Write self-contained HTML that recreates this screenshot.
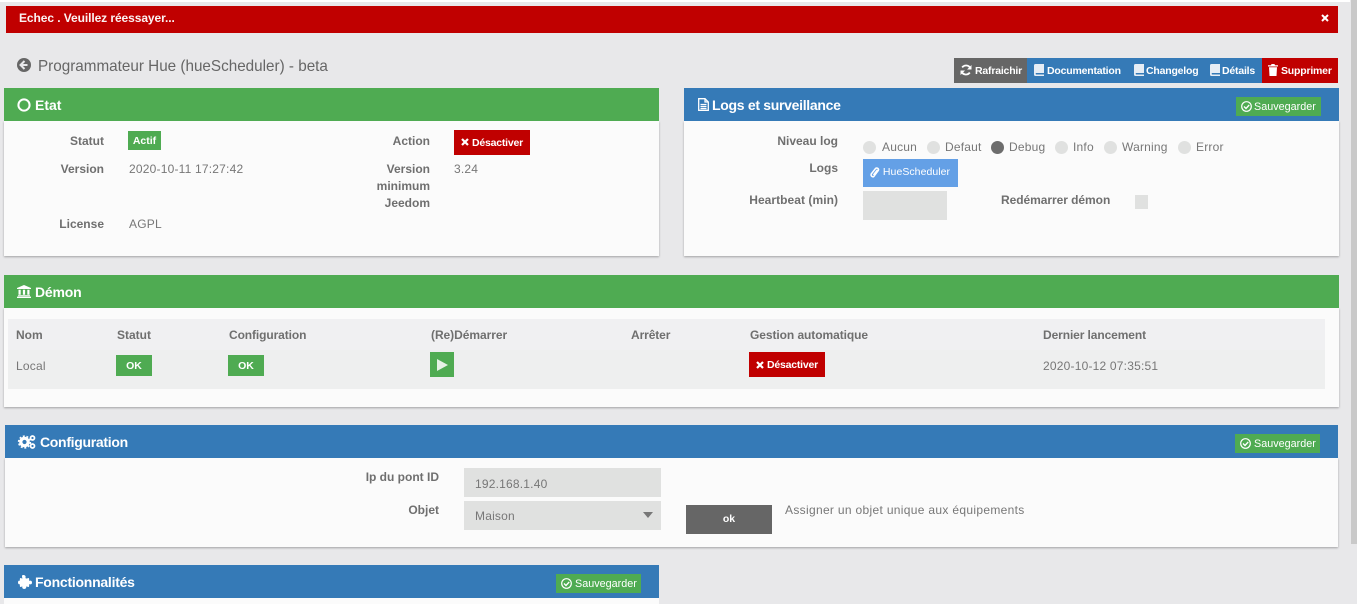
<!DOCTYPE html>
<html lang="fr"><head><meta charset="utf-8"><title>Programmateur Hue</title>
<style>
html,body{margin:0;padding:0;width:1357px;height:604px;overflow:hidden;background:#e8e8ea;font-family:"Liberation Sans",sans-serif;font-size:12px;color:#666}
.a{position:absolute;white-space:nowrap;margin-top:1px}
.bg{position:absolute}
.h{position:absolute;height:33px;color:#fff;font-size:14px;line-height:33px}
.body{position:absolute;background:#fbfbfb;box-shadow:0 1px 2px rgba(0,0,0,.3)}
.l{position:absolute;text-align:right;font-weight:bold;font-size:12px;color:#6f6f6f;white-space:nowrap;line-height:17px;margin-top:1px}
.v{position:absolute;font-size:12px;color:#777;white-space:nowrap;line-height:17px;margin-top:1px;letter-spacing:.2px}
.btn{position:absolute;color:#fff;font-size:10.5px;font-weight:bold;text-align:center;white-space:nowrap}
.btn span{letter-spacing:-.2px}
.red{background:#c00000}.grn{background:#4fab52}.blu{background:#357ab7}
.sv{position:absolute;background:#4fab52;color:#fff;font-size:10.8px;line-height:19px;height:19px;white-space:nowrap}
svg{position:absolute;overflow:visible}
.rd{position:absolute;width:13px;height:13px;border-radius:50%;background:#e0e1e0;top:141px}
.tb{position:absolute;height:25px;line-height:27px;color:#fff;font-size:10.5px;font-weight:bold;top:58px;white-space:nowrap;letter-spacing:-.2px}
</style></head><body>
<div class="bg" style="left:0;top:0;width:1350px;height:2px;background:#fff"></div>
<div class="bg" style="left:1351px;top:0;width:6px;height:544px;background:#c9c9c9"></div>

<!-- alert -->
<div class="bg red" style="left:6px;top:6px;width:1332px;height:27px"></div>
<div class="a" style="left:19px;top:10px;color:#fff;font-size:12px;font-weight:bold;line-height:15px;letter-spacing:-.08px;opacity:.95">Echec . Veuillez réessayer...</div>
<svg style="left:1321px;top:14px" width="8" height="8" viewBox="0 0 8 8"><path d="M1 1L7 7M7 1L1 7" stroke="#fff" stroke-width="2"/></svg>

<!-- title -->
<svg style="left:17px;top:58px" width="14" height="14" viewBox="0 0 14 14"><circle cx="7" cy="7" r="7" fill="#666"/><path d="M7.500 3L3.500 7l4 4M4 7h6.500" stroke="#e8e8ea" stroke-width="2" fill="none"/></svg>
<div class="a" style="left:38px;top:57px;font-size:15.25px;line-height:18px;color:#666">Programmateur Hue (hueScheduler) - beta</div>

<!-- toolbar -->
<div class="bg" style="left:954px;top:58px;width:73px;height:25px;background:#666"></div>
<div class="bg blu" style="left:1027px;top:58px;width:235px;height:25px"></div>
<div class="bg red" style="left:1262px;top:58px;width:76px;height:25px"></div>
<svg style="left:960px;top:64px" width="12" height="12" viewBox="0 0 12 12"><path d="M10.500 4.500A4.800 4.800 0 0 0 2.200 3.400M1.500 7.500a4.800 4.800 0 0 0 8.300 1.100" stroke="#fff" stroke-width="1.800" fill="none"/><path d="M11.500 1v4.500H7zM.5 11V6.500H5z" fill="#fff"/></svg>
<div class="tb" style="left:975px">Rafraichir</div>
<svg style="left:1034px;top:64px" width="10" height="12" viewBox="0 0 10 12"><path d="M1.500 0H10v9H2a1 1 0 0 0 0 1.500h8V12H1.500A1.500 1.500 0 0 1 0 10.500V1.500A1.500 1.500 0 0 1 1.500 0z" fill="#e6edf5"/></svg>
<div class="tb" style="left:1047px">Documentation</div>
<svg style="left:1134px;top:64px" width="10" height="12" viewBox="0 0 10 12"><path d="M1.500 0H10v9H2a1 1 0 0 0 0 1.500h8V12H1.500A1.500 1.500 0 0 1 0 10.500V1.500A1.500 1.500 0 0 1 1.500 0z" fill="#e6edf5"/></svg>
<div class="tb" style="left:1146px">Changelog</div>
<svg style="left:1210px;top:64px" width="10" height="12" viewBox="0 0 10 12"><path d="M1.500 0H10v9H2a1 1 0 0 0 0 1.500h8V12H1.500A1.500 1.500 0 0 1 0 10.500V1.500A1.500 1.500 0 0 1 1.500 0z" fill="#e6edf5"/></svg>
<div class="tb" style="left:1222px">Détails</div>
<svg style="left:1268px;top:64px" width="10" height="12" viewBox="0 0 10 12"><path d="M3.500 0h3l.5 1.200h3V2.500H0V1.200h3zM1 3.300h8L8.500 12h-7z" fill="#fff"/></svg>
<div class="tb" style="left:1281px">Supprimer</div>

<!-- Etat -->
<div class="body" style="left:4px;top:121px;width:655px;height:135px"></div>
<div class="h grn" style="left:4px;top:88px;width:655px"></div>
<svg style="left:17px;top:98px" width="14" height="14" viewBox="0 0 14 14"><circle cx="7" cy="7" r="5.600" fill="none" stroke="#fff" stroke-width="2"/></svg>
<div class="a" style="left:35px;top:88px;color:#fff;font-size:14px;line-height:33px;font-weight:bold">Etat</div>
<div class="l" style="left:40px;width:64px;top:132px">Statut</div>
<div class="btn grn" style="left:128px;top:131px;width:33px;height:19px;line-height:21px">Actif</div>
<div class="l" style="left:340px;width:90px;top:132px">Action</div>
<div class="btn red" style="left:454px;top:130px;width:76px;height:25px;line-height:26px"><span style="margin-left:11px">Désactiver</span></div>
<svg style="left:461px;top:138px" width="8" height="8" viewBox="0 0 8 8"><path d="M1 1L7 7M7 1L1 7" stroke="#fff" stroke-width="2.200"/></svg>
<div class="l" style="left:40px;width:64px;top:160px">Version</div>
<div class="v" style="left:129px;top:160px">2020-10-11 17:27:42</div>
<div class="l" style="left:340px;width:90px;top:160px">Version</div>
<div class="l" style="left:340px;width:90px;top:177px">minimum</div>
<div class="l" style="left:340px;width:90px;top:194px">Jeedom</div>
<div class="v" style="left:454px;top:160px">3.24</div>
<div class="l" style="left:40px;width:64px;top:215px">License</div>
<div class="v" style="left:129px;top:215px">AGPL</div>

<!-- Logs -->
<div class="body" style="left:684px;top:121px;width:655px;height:135px"></div>
<div class="h blu" style="left:684px;top:88px;width:655px"></div>
<svg style="left:698px;top:98px" width="11" height="13" viewBox="0 0 11 13"><path d="M.7.700H7L10.300 4v8.300H.7zM7 .700V4h3.300M2.500 6.500h6M2.500 8.500h6M2.500 10.500h6" fill="none" stroke="#fff" stroke-width="1.300"/></svg>
<div class="a" style="left:712px;top:88px;color:#fff;font-size:14px;line-height:33px;font-weight:bold;letter-spacing:-.3px">Logs et surveillance</div>
<div class="sv" style="left:1236px;top:97px;width:85px"><span style="position:absolute;left:18px;top:.5px">Sauvegarder</span></div>
<svg style="left:1241px;top:101px" width="11" height="11" viewBox="0 0 11 11"><circle cx="5.500" cy="5.500" r="4.800" fill="none" stroke="#fff" stroke-width="1.200"/><path d="M3 5.500l2 2 3.200-3.500" fill="none" stroke="#fff" stroke-width="1.300"/></svg>
<div class="l" style="left:740px;width:98px;top:132px">Niveau log</div>
<div class="rd" style="left:863px"></div><div class="v" style="left:882px;top:138px">Aucun</div>
<div class="rd" style="left:927px"></div><div class="v" style="left:945px;top:138px">Defaut</div>
<div class="rd" style="left:991px;background:#6d6d6d"></div><div class="v" style="left:1009px;top:138px">Debug</div>
<div class="rd" style="left:1055px"></div><div class="v" style="left:1073px;top:138px">Info</div>
<div class="rd" style="left:1104px"></div><div class="v" style="left:1122px;top:138px">Warning</div>
<div class="rd" style="left:1178px"></div><div class="v" style="left:1196px;top:138px">Error</div>
<div class="l" style="left:740px;width:98px;top:159px">Logs</div>
<div class="btn" style="left:863px;top:159px;width:95px;height:28px;line-height:27px;background:#64a0e6"><span style="margin-left:12px;font-weight:normal;letter-spacing:.05px">HueScheduler</span></div>
<svg style="left:870px;top:167px" width="10" height="11" viewBox="0 0 10 11"><path d="M3.500 8L7.500 2.800M1.200 7L5.500 1.500C7 .2 9.200 1.700 8.300 3.500L4 9.300C2.800 10.500.5 9.200 1.200 7z" fill="none" stroke="#fff" stroke-width="1.500"/></svg>
<div class="l" style="left:740px;width:98px;top:191px;letter-spacing:.05px">Heartbeat (min)</div>
<div class="bg" style="left:863px;top:191px;width:84px;height:29px;background:#e0e1e0"></div>
<div class="l" style="left:1001px;top:191px;letter-spacing:-.05px">Redémarrer démon</div>
<div class="bg" style="left:1135px;top:195px;width:13px;height:14px;background:#e0e1e0"></div>

<!-- Démon -->
<div class="body" style="left:4px;top:308px;width:1335px;height:99px"></div>
<div class="h grn" style="left:4px;top:275px;width:1335px"></div>
<svg style="left:17px;top:285px" width="14" height="13" viewBox="0 0 14 13"><path d="M7 0l7 3v1H0V3zM1.500 4.800h2.200v5H1.500zM5.900 4.800h2.200v5H5.900zM10.300 4.800h2.200v5h-2.200zM1 10.200h12v1H1zM0 11.600h14V13H0z" fill="#fff"/></svg>
<div class="a" style="left:35px;top:275px;color:#fff;font-size:14px;line-height:33px;font-weight:bold;letter-spacing:-.2px">Démon</div>
<div class="bg" style="left:8px;top:319px;width:1317px;height:70px;background:#eeefef"></div>
<div class="bg" style="left:8px;top:319px;width:1317px;height:31px;background:#f0f0f2"></div>
<div class="l" style="left:16px;top:326px">Nom</div>
<div class="l" style="left:117px;top:326px">Statut</div>
<div class="l" style="left:229px;top:326px;letter-spacing:-.1px">Configuration</div>
<div class="l" style="left:431px;top:326px;letter-spacing:-.05px">(Re)Démarrer</div>
<div class="l" style="left:631px;top:326px;letter-spacing:-.1px">Arrêter</div>
<div class="l" style="left:750px;top:326px;letter-spacing:-.07px">Gestion automatique</div>
<div class="l" style="left:1043px;top:326px;letter-spacing:-.1px">Dernier lancement</div>
<div class="v" style="left:16px;top:357px">Local</div>
<div class="btn grn" style="left:116px;top:355px;width:36px;height:21px;line-height:22px">OK</div>
<div class="btn grn" style="left:228px;top:355px;width:36px;height:21px;line-height:22px">OK</div>
<div class="bg grn" style="left:430px;top:352px;width:24px;height:25px"></div>
<svg style="left:437px;top:359px" width="11" height="12" viewBox="0 0 11 12"><path d="M0 0L11 6 0 12z" fill="#e6f2e6"/></svg>
<div class="btn red" style="left:749px;top:352px;width:76px;height:25px;line-height:27px"><span style="margin-left:11px">Désactiver</span></div>
<svg style="left:756px;top:361px" width="8" height="8" viewBox="0 0 8 8"><path d="M1 1L7 7M7 1L1 7" stroke="#fff" stroke-width="2.200"/></svg>
<div class="v" style="left:1043px;top:357px">2020-10-12 07:35:51</div>

<!-- Configuration -->
<div class="body" style="left:5px;top:458px;width:1333px;height:89px"></div>
<div class="h blu" style="left:5px;top:425px;width:1333px"></div>
<svg style="left:18px;top:435px" width="18" height="14" viewBox="0 0 18 14"><circle cx="6.500" cy="7" r="3.700" fill="none" stroke="#fff" stroke-width="3.200"/><circle cx="6.500" cy="7" r="5.900" fill="none" stroke="#fff" stroke-width="1.500" stroke-dasharray="2 1.700"/><circle cx="14.500" cy="3" r="2" fill="none" stroke="#fff" stroke-width="1.700"/><circle cx="14.500" cy="11" r="2" fill="none" stroke="#fff" stroke-width="1.700"/></svg>
<div class="a" style="left:40px;top:425px;color:#fff;font-size:14px;line-height:33px;font-weight:bold;letter-spacing:-.3px">Configuration</div>
<div class="sv" style="left:1235px;top:434px;width:85px"><span style="position:absolute;left:19px;top:.5px">Sauvegarder</span></div>
<svg style="left:1240px;top:438px" width="11" height="11" viewBox="0 0 11 11"><circle cx="5.500" cy="5.500" r="4.800" fill="none" stroke="#fff" stroke-width="1.200"/><path d="M3 5.500l2 2 3.200-3.500" fill="none" stroke="#fff" stroke-width="1.300"/></svg>
<div class="l" style="left:340px;width:99px;top:468px">Ip du pont ID</div>
<div class="bg" style="left:464px;top:468px;width:197px;height:29px;background:#e0e1e0"></div>
<div class="v" style="left:475px;top:475px">192.168.1.40</div>
<div class="l" style="left:340px;width:99px;top:501px">Objet</div>
<div class="bg" style="left:464px;top:501px;width:197px;height:29px;background:#e0e1e0"></div>
<div class="v" style="left:475px;top:507px">Maison</div>
<svg style="left:643px;top:512px" width="11" height="7" viewBox="0 0 11 7"><path d="M0 0h10L5 6z" fill="#777"/></svg>
<div class="btn" style="left:686px;top:505px;width:86px;height:29px;line-height:29px;background:#666">ok</div>
<div class="v" style="left:785px;top:501px;letter-spacing:.32px">Assigner un objet unique aux équipements</div>

<!-- Fonctionnalités -->
<div class="body" style="left:4px;top:598px;width:655px;height:6px;box-shadow:none"></div>
<div class="h blu" style="left:4px;top:565px;width:655px"></div>
<svg style="left:18px;top:575px" width="14" height="14" viewBox="0 0 14 14"><path d="M5 0c2 0 3 1 2.500 2.500C7.300 3.300 8 3.500 8.500 3.500L11 3l.3 3c1-.8 2.700-.5 2.700 1.500S12.300 9.800 11.300 9l-.3 3-3-.5c.7 1-.2 2.500-1.800 2.500S3.800 12.500 4.500 11.500L2 12l-.3-3C1 9.700 0 9 0 7.500S1 5.200 1.700 6L2 3l2.500.5C4 2 3.500 0 5 0z" fill="#fff"/></svg>
<div class="a" style="left:35px;top:565px;color:#fff;font-size:14px;line-height:33px;font-weight:bold;letter-spacing:-.25px">Fonctionnalités</div>
<div class="sv" style="left:556px;top:574px;width:85px"><span style="position:absolute;left:19px;top:.5px">Sauvegarder</span></div>
<svg style="left:561px;top:578px" width="11" height="11" viewBox="0 0 11 11"><circle cx="5.500" cy="5.500" r="4.800" fill="none" stroke="#fff" stroke-width="1.200"/><path d="M3 5.500l2 2 3.200-3.500" fill="none" stroke="#fff" stroke-width="1.300"/></svg>
</body></html>
